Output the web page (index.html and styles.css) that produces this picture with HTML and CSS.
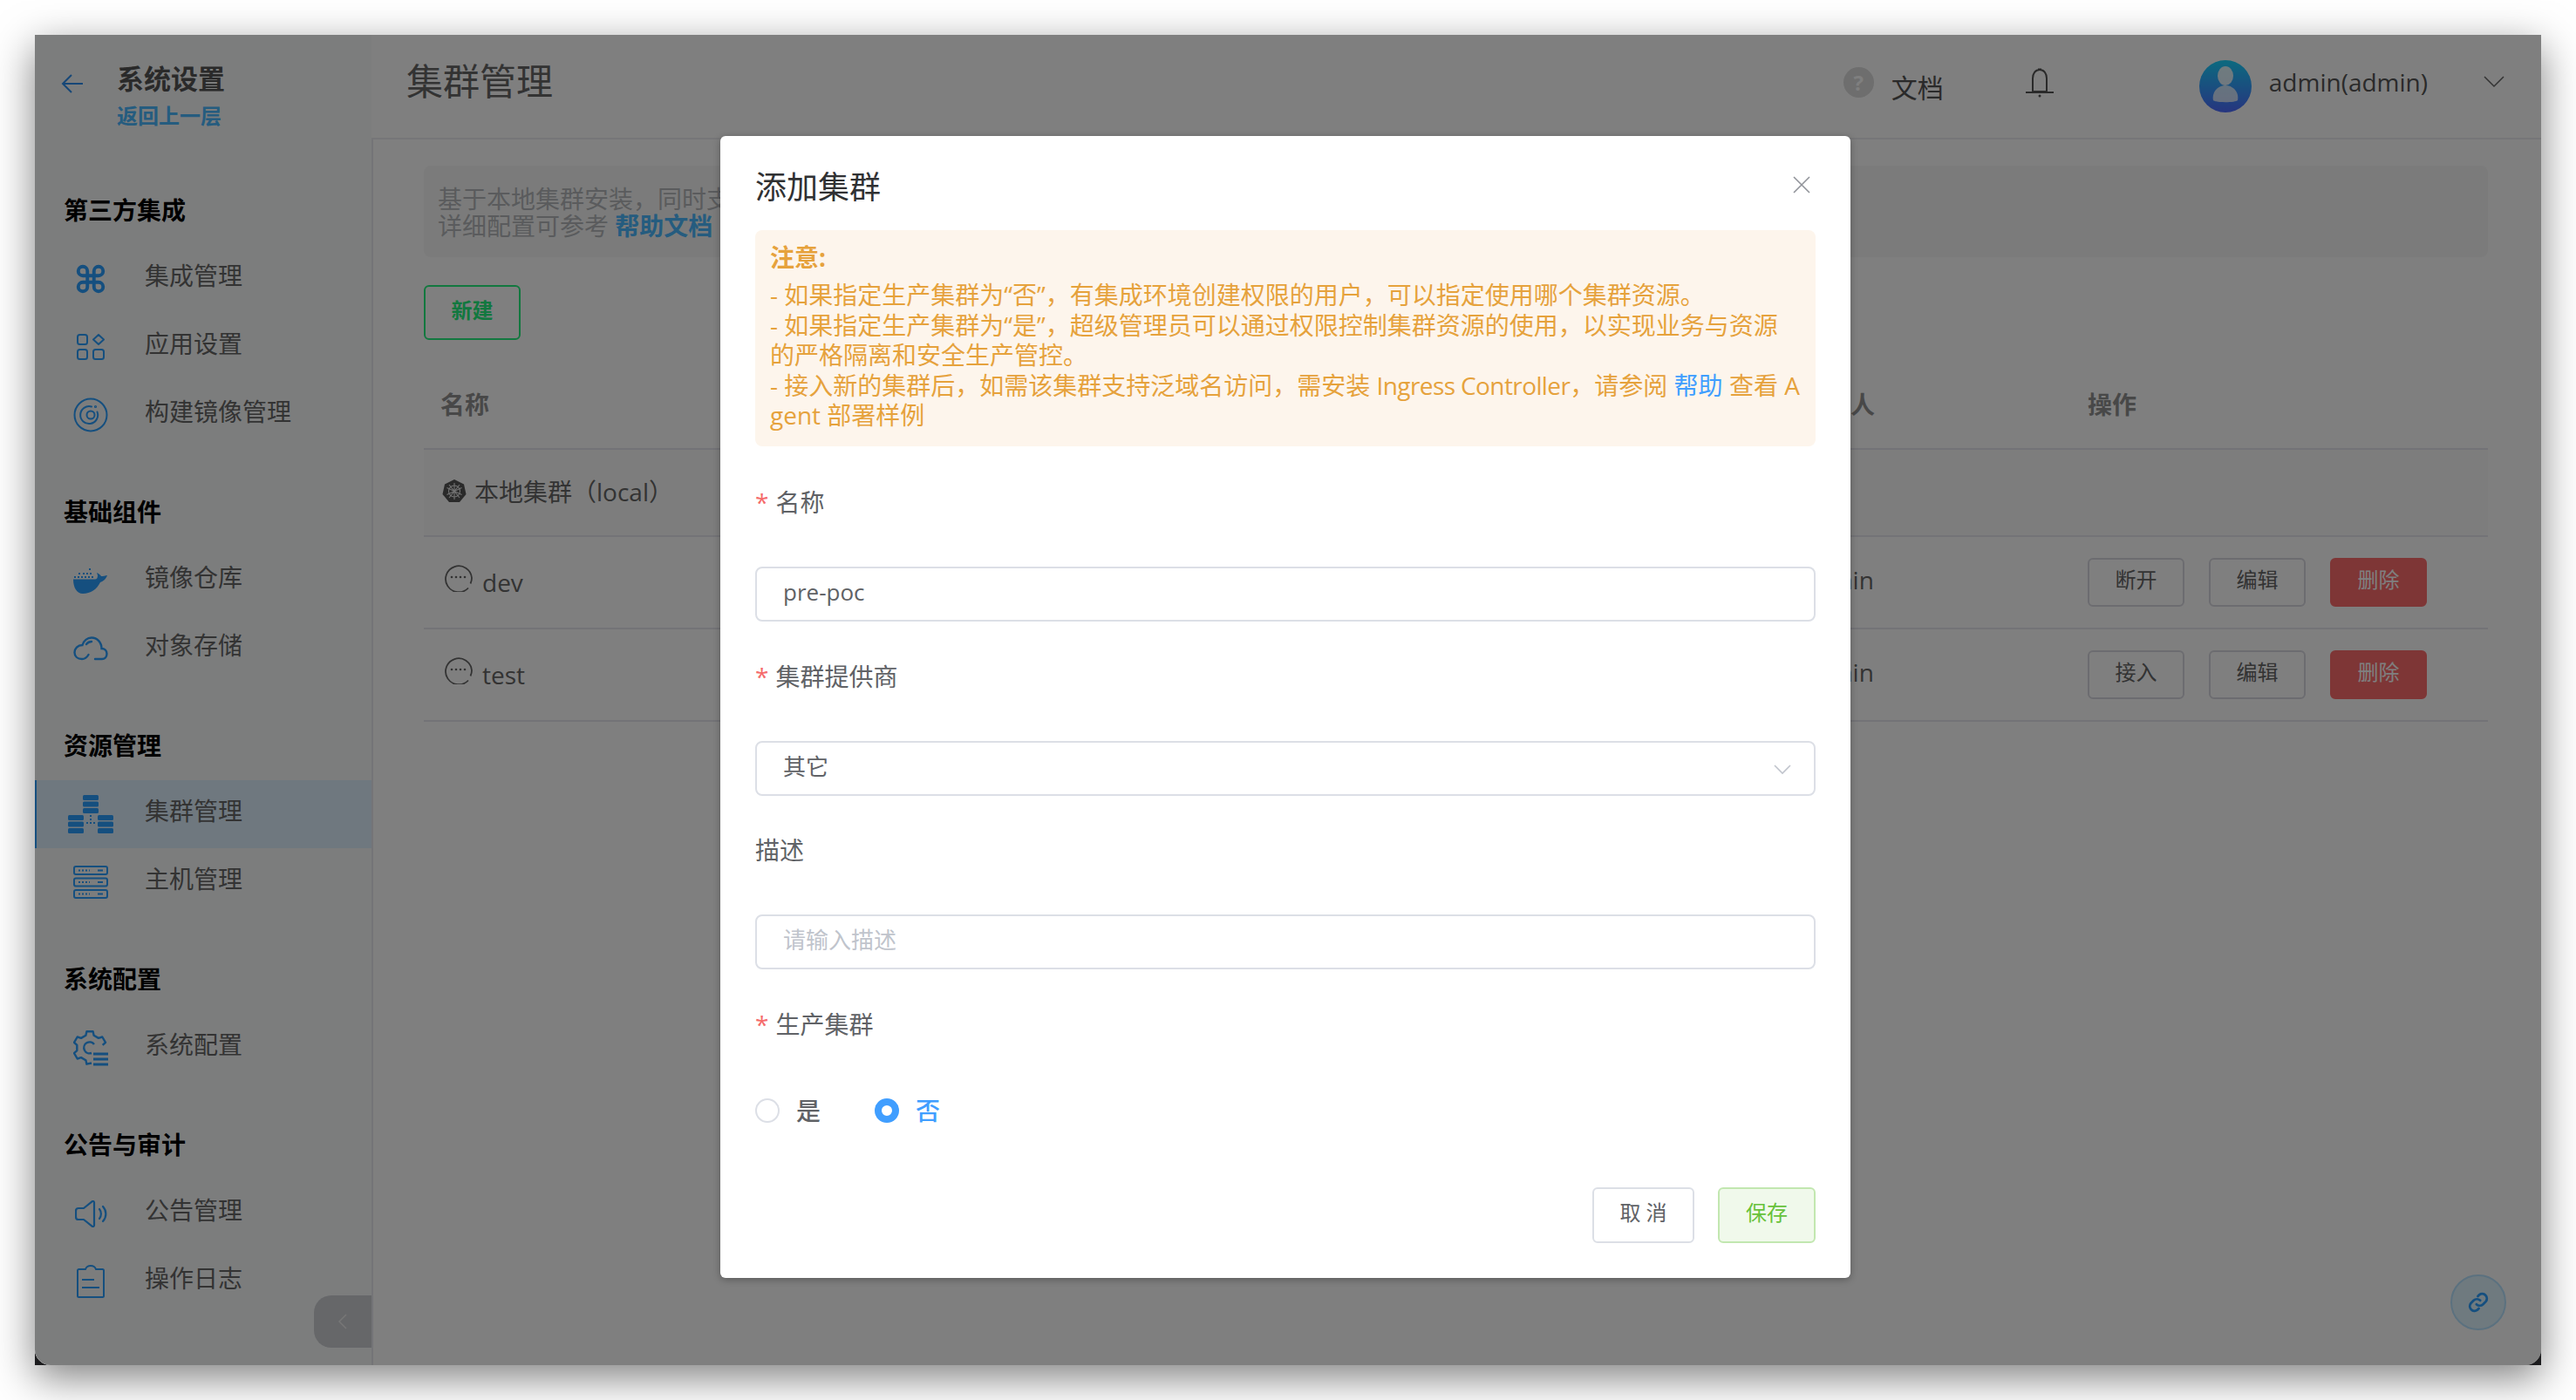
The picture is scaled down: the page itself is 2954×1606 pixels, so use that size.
FILE: index.html
```html
<!DOCTYPE html>
<html lang="zh-CN">
	<head>
		<meta charset="utf-8" />
		<title>集群管理</title>
		<link rel="stylesheet" href="styles.css">
	</head>
	<body>
		<div class="window">
			<div class="app">
				<aside class="sidebar">
					<div class="side-head">
						<svg class="back" viewBox="0 0 26 24"><path d="M25 12H2M12 2 2 12l10 10"/></svg>
						<div>
							<div class="side-title">系统设置</div>
							<div class="side-back">返回上一层</div>
						</div>
					</div>

					<div class="group group-first">第三方集成</div>
					<div class="item">
						<span class="ico"><svg width="36" height="36" viewBox="0 0 24 24" fill="none" stroke="currentColor" stroke-width="2.6"><path d="M18 2.500a3.500 3.500 0 0 0-3.500 3.500v12a3.500 3.500 0 1 0 3.500-3.500H6a3.500 3.500 0 1 0 3.500 3.500V6a3.500 3.500 0 1 0-3.500 3.500h12a3.500 3.500 0 0 0 0-7z"/></svg></span>
						<span>集成管理</span>
					</div>
					<div class="item">
						<span class="ico"><svg width="32" height="30" viewBox="0 0 32 30" fill="none" stroke="currentColor" stroke-width="2"><rect x="1" y="1" width="11" height="11" rx="2.5"/><rect x="1" y="18" width="11" height="11" rx="2.5"/><rect x="19" y="18" width="12" height="11" rx="2.5"/><path d="M25 1l6 5.5-6 5.5-6-5.5z" stroke-linejoin="round"/></svg></span>
						<span>应用设置</span>
					</div>
					<div class="item">
						<span class="ico"><svg width="40" height="40" viewBox="0 0 40 40" fill="none" stroke="currentColor" stroke-width="2"><circle cx="20" cy="20" r="18.5"/><circle cx="20" cy="20" r="4.5"/><path d="M27.5 16.5A10 10 0 1 1 21 10.5" stroke-linecap="round"/><circle cx="25.5" cy="10.5" r=".6"/></svg></span>
						<span>构建镜像管理</span>
					</div>

					<div class="group">基础组件</div>
					<div class="item">
						<span class="ico"><svg width="40" height="30" viewBox="0 0 40 30" fill="currentColor"><path d="M0 13.5h25c2 0 3-1.5 3-4.5l-1-3c2 1 4 2 5 4 2 0 5-.5 7-1-2 5-5 7-8 8-4 8-11 13-20 13C4 30 0 23 0 13.5z"/><rect x="1" y="10" width="2" height="2"/><rect x="5" y="10" width="2" height="2"/><rect x="9" y="10" width="2" height="2"/><rect x="13" y="10" width="2" height="2"/><rect x="17" y="10" width="2" height="2"/><rect x="21" y="10" width="2" height="2"/><rect x="6" y="6" width="2" height="2"/><rect x="11" y="6" width="2" height="2"/><rect x="15" y="6" width="2" height="2"/><rect x="19" y="6" width="2" height="2"/><rect x="18" y="1" width="2" height="2"/></svg></span>
						<span>镜像仓库</span>
					</div>
					<div class="item">
						<span class="ico"><svg width="40" height="28" viewBox="0 0 40 28" fill="none" stroke="currentColor" stroke-width="2.4" stroke-linecap="round"><path d="M25 26h8c3 0 5.500-2.500 5.500-6s-2.500-6-6-6c0-7-5-12.500-11.500-12.500C16 1.500 12 5 10.500 10 5 10 1.500 14 1.500 18.500S5 26 10 26c4 0 6-2.500 7.500-5"/><path d="M15 9c1.500-2 4-3 6-3"/></svg></span>
						<span>对象存储</span>
					</div>

					<div class="group">资源管理</div>
					<div class="item item-on">
						<span class="ico"><svg width="52" height="44" viewBox="0 0 52 44" fill="currentColor"><rect x="17" width="18" height="6" rx="1.500"/><rect x="17" y="7.500" width="18" height="6" rx="1.500"/><rect x="17" y="15" width="18" height="6" rx="1.500"/><rect y="23" width="18" height="6" rx="1.500"/><rect y="30.500" width="18" height="6" rx="1.500"/><rect y="38" width="18" height="6" rx="1.500"/><rect x="34" y="23" width="18" height="6" rx="1.500"/><rect x="34" y="30.500" width="18" height="6" rx="1.500"/><rect x="34" y="38" width="18" height="6" rx="1.500"/><rect x="25" y="23" width="2" height="2"/><rect x="25" y="27" width="2" height="2"/><rect x="25" y="31" width="2" height="2"/><rect x="21" y="31" width="2" height="2"/><rect x="29" y="31" width="2" height="2"/></svg></span>
						<span>集群管理</span>
					</div>
					<div class="item">
						<span class="ico"><svg width="40" height="38" viewBox="0 0 40 38" fill="none" stroke="currentColor" stroke-width="2"><rect x="1" y="1" width="38" height="9" rx="2"/><rect x="1" y="14.500" width="38" height="9" rx="2"/><rect x="1" y="28" width="38" height="9" rx="2"/><path d="M6 5.500h13M6 19h13M6 32.500h13" stroke-dasharray="2 2"/><path d="M28 5.500h6M28 19h6M28 32.500h6"/></svg></span>
						<span>主机管理</span>
					</div>

					<div class="group">系统配置</div>
					<div class="item">
						<span class="ico"><svg width="40" height="41" viewBox="0 0 40 41" fill="none" stroke="currentColor" stroke-width="2.4" stroke-linejoin="round"><path d="M21 37.500 15.400 38.700 14.400 34.300 9 31.100 4.700 32.500 1 26.200 4.300 23.100V16.900L1 13.800 4.700 7.500 9 8.900 14.400 5.700 15.400 1.300H22.600L23.600 5.700 29 8.900 33.300 7.500 37 13.800 33.700 16.900"/><path d="M24 16a6.500 6.500 0 1 0-3 10"/><path d="M23 27h17M23 33h17M23 39h17" stroke-width="2.800"/></svg></span>
						<span>系统配置</span>
					</div>

					<div class="group">公告与审计</div>
					<div class="item">
						<span class="ico"><svg width="37" height="31" viewBox="0 0 37 31" fill="none" stroke="currentColor" stroke-width="2.2" stroke-linejoin="round" stroke-linecap="round"><path d="M22 2.500v26c0 1.500-1.500 2-2.500 1.200L10 22H4c-1.700 0-3-1.300-3-3v-7c0-1.700 1.300-3 3-3h6l9.500-7.700c1-.8 2.500-.3 2.500 1.200z"/><path d="M28 10c2.500 3 2.500 8 0 11M32 7c4.500 5 4.500 12 0 17"/></svg></span>
						<span>公告管理</span>
					</div>
					<div class="item">
						<span class="ico"><svg width="32" height="38" viewBox="0 0 32 38" fill="none" stroke="currentColor" stroke-width="2"><path d="M10 5H2.500C1.600 5 1 5.600 1 6.500v29c0 .9.600 1.500 1.500 1.500h27c.9 0 1.500-.6 1.500-1.500v-29c0-.9-.6-1.500-1.500-1.500H22c-1-3-3.500-4-6-4s-5 1-6 4z"/><path d="M6 17h14M6 26h20"/></svg></span>
						<span>操作日志</span>
					</div>
					<div class="collapse"><svg width="10" height="18" viewBox="0 0 10 18"><path d="M9 1 1 9l8 8"/></svg></div>
				</aside>

				<div class="main">
					<header class="topbar">
						<div class="page-title">集群管理</div>
						<div class="help"><span class="help-dot">?</span><span>文档</span></div>
						<svg class="bell" width="36" height="36" viewBox="0 0 36 36" fill="none" stroke="currentColor" stroke-width="2"><path d="M18 3c-5 0-8 4.500-8 10v15h16V13c0-5.500-3-10-8-10zM2 29h32M16 2.500h4"/><circle cx="18" cy="33" r="1.500" fill="currentColor" stroke="none"/></svg>
						<svg class="avatar" width="60" height="60" viewBox="0 0 60 60">
							<defs><linearGradient id="ava" x1="0" y1="0" x2="0" y2="1"><stop offset="0" stop-color="#18d4ff"/><stop offset="1" stop-color="#4e6aff"/></linearGradient></defs>
							<circle cx="30" cy="30" r="30" fill="url(#ava)"/>
							<ellipse cx="30" cy="18" rx="9" ry="11" fill="#fff" opacity=".85"/>
							<path d="M16 46c-2-9 5-17 14-17s16 8 14 17c-2 3-26 3-28 0z" fill="#fff" opacity=".75"/>
						</svg>
						<span class="user">admin(admin)</span>
						<svg class="user-arrow" width="24" height="14" viewBox="0 0 24 14"><path d="M1 1l11 11L23 1"/></svg>
					</header>

					<div class="content">
						<div class="banner">基于本地集群安装，同时支持多个集群的接入与统一管理，<br>详细配置可参考 <a class="banner-link">帮助文档</a></div>
						<button class="btn-new">新建</button>
						<div class="row row-head"><span>名称</span><span>创建人</span><span>操作</span></div>
						<div class="row row-local">
							<span class="cell">
								<svg class="k8s" width="28" height="28" viewBox="0 0 28 28"><path d="M14 1 25 6.500l2.500 11.500L20 27H8L.5 18 3 6.500z" fill="#555"/><g fill="none" stroke="#e4e4e4" stroke-width="1.100"><circle cx="14" cy="14.500" r="6.500"/><path d="M14 5v19M5.500 10.500l17 8M22.500 10.500l-17 8M8 22l12-15M20 22 8 7"/></g></svg>
								<span>本地集群（local）</span>
							</span>
						</div>
						<div class="row row-tall">
							<span class="cell">
								<svg class="dots" width="32" height="32" viewBox="0 0 32 32" fill="none" stroke="#666" stroke-width="1.800"><path d="M27 27.500A15 15 0 1 1 31 16c0 2.500-.6 4.600-1.500 6.500"/><g fill="#666" stroke="none"><circle cx="8" cy="15" r="1.300"/><circle cx="13" cy="15" r="1.300"/><circle cx="18" cy="15" r="1.300"/><circle cx="23" cy="15" r="1.300"/></g></svg>
								<span>dev</span>
							</span>
							<span class="owner">admin</span>
							<span class="ops"><button class="btn">断开</button><button class="btn">编辑</button><button class="btn btn-del">删除</button></span>
						</div>
						<div class="row row-tall">
							<span class="cell">
								<svg class="dots" width="32" height="32" viewBox="0 0 32 32" fill="none" stroke="#666" stroke-width="1.800"><path d="M27 27.500A15 15 0 1 1 31 16c0 2.500-.6 4.600-1.500 6.500"/><g fill="#666" stroke="none"><circle cx="8" cy="15" r="1.300"/><circle cx="13" cy="15" r="1.300"/><circle cx="18" cy="15" r="1.300"/><circle cx="23" cy="15" r="1.300"/></g></svg>
								<span>test</span>
							</span>
							<span class="owner">admin</span>
							<span class="ops"><button class="btn">接入</button><button class="btn">编辑</button><button class="btn btn-del">删除</button></span>
						</div>
						<div class="float-link"><svg width="26" height="26" viewBox="0 0 24 24" fill="none" stroke="currentColor" stroke-width="2.600" stroke-linecap="round"><path d="M10 14a5 5 0 0 0 7 0l3-3a5 5 0 0 0-7-7l-1.500 1.500"/><path d="M14 10a5 5 0 0 0-7 0l-3 3a5 5 0 0 0 7 7l1.500-1.500"/></svg></div>
					</div>
				</div>
			</div>

			<div class="overlay">
				<div class="modal">
					<div class="modal-head">
						<span class="modal-title">添加集群</span>
						<svg class="modal-close" width="20" height="20" viewBox="0 0 20 20"><path d="M1 1l18 18M19 1 1 19"/></svg>
					</div>
					<div class="modal-body">
						<div class="alert">
							<div class="alert-title">注意:</div>
							<div class="alert-text">- 如果指定生产集群为“否”，有集成环境创建权限的用户，可以指定使用哪个集群资源。<br>- 如果指定生产集群为“是”，超级管理员可以通过权限控制集群资源的使用，以实现业务与资源的严格隔离和安全生产管控。<br>- 接入新的集群后，如需该集群支持泛域名访问，需安装 <span class="alert-latin">Ingress Controller</span>，请参阅 <a class="alert-link">帮助</a> 查看 Agent 部署样例</div>
						</div>
						<div class="field">
							<label class="label"><i class="req">*</i>名称</label>
							<div class="input">pre-poc</div>
						</div>
						<div class="field">
							<label class="label"><i class="req">*</i>集群提供商</label>
							<div class="input input-select">其它<svg width="20" height="12" viewBox="0 0 20 12"><path d="M1 1l9 9 9-9"/></svg></div>
						</div>
						<div class="field">
							<label class="label">描述</label>
							<div class="input input-empty">请输入描述</div>
						</div>
						<div class="field field-radio">
							<label class="label"><i class="req">*</i>生产集群</label>
							<div class="radios">
								<span class="radio"><i class="radio-dot"></i>是</span>
								<span class="radio radio-on"><i class="radio-dot"></i>否</span>
							</div>
						</div>
					</div>
					<div class="modal-foot">
						<button class="foot-btn">取 消</button>
						<button class="foot-btn foot-save">保存</button>
					</div>
				</div>
			</div>
		</div>
	</body>
</html>
```

FILE: styles.css
```css
html, body {
	margin:0;
	padding:0;
	height:100%;
	overflow:hidden;
	background:#fff;
	font-family:"Open Sans","Noto Sans CJK SC",sans-serif;
	font-size:28px;
}
button {
	font-family:inherit;
	cursor:pointer;
}
.window {
	position:relative;
	width:2874px;
	height:1526px;
	margin:40px;
	background:#1c1c1e;
	box-shadow:0 14px 44px rgba(0,0,0,.5);
}
.app {
	display:flex;
	height:100%;
	background:#fff;
	border-radius:0 0 18px 18px;
	overflow:hidden;
}

/* sidebar */
.sidebar {
	position:relative;
	flex:0 0 386px;
	box-sizing:border-box;
	background:#f8fafb;
	color:#666;
}
.side-head {
	display:flex;
	padding:32px 0 0 30px;
	height:128px;
	box-sizing:border-box;
}
.back {
	width:26px;
	height:24px;
	margin:12px 38px 0 0;
	fill:none;
	stroke:#2f8fee;
	stroke-width:2;
}
.side-title {
	font-size:31px;
	line-height:36px;
	font-weight:700;
	color:#555;
}
.side-back {
	margin-top:8px;
	font-size:24px;
	line-height:34px;
	font-weight:700;
	color:#4ab8ff;
}
.group {
	height:36px;
	line-height:36px;
	margin:54px 0 22px 33px;
	font-weight:700;
	color:#000;
}
.group-first {
	margin-top:55px;
}
.item {
	display:flex;
	align-items:center;
	height:78px;
	padding-left:23px;
	box-sizing:border-box;
	border-left:2px solid transparent;
	line-height:70px;
}
.item > span:last-child {
	margin-top:-8px;
}
.item-on {
	background:#dff0ff;
	border-left-color:#2a9fff;
}
.ico {
	display:flex;
	flex:0 0 78px;
	justify-content:center;
	align-items:center;
	margin-right:23px;
	color:#2a9fff;
}
.collapse {
	position:absolute;
	right:0;
	bottom:20px;
	display:flex;
	align-items:center;
	justify-content:center;
	width:66px;
	height:60px;
	background:#ccced2;
	border-radius:20px 0 0 20px;
}
.collapse svg {
	fill:none;
	stroke:#eee;
	stroke-width:1.500;
}

/* main */
.main {
	flex:1;
	display:flex;
	flex-direction:column;
	min-width:0;
}
.topbar {
	display:flex;
	align-items:center;
	flex:0 0 120px;
	box-sizing:border-box;
	padding:0 42px 0 40px;
	border-bottom:2px solid #ececf0;
	color:#666;
}
.page-title {
	font-size:42px;
	flex:1;
	margin-top:-18px;
}
.help {
	display:flex;
	align-items:center;
	font-size:30px;
	color:#555;
}
.help-dot {
	display:flex;
	justify-content:center;
	align-items:center;
	width:35px;
	height:35px;
	margin-right:20px;
	margin-top:-10px;
	border-radius:50%;
	background:#dcdcdc;
	color:#fff;
	font-size:24px;
	font-weight:700;
}
.bell {
	margin:-8px 0 0 92px;
	color:#555;
}
.avatar {
	margin:0 20px 0 165px;
}
.user {
	margin-top:-10px;
	color:#555;
}
.user-arrow {
	margin:-10px 0 0 64px;
	fill:none;
	stroke:#666;
	stroke-width:1.500;
}
.content {
	position:relative;
	flex:1;
	box-sizing:border-box;
	padding:30px 61px 0 58px;
	border-left:2px solid #e8e8ee;
}
.banner {
	box-sizing:border-box;
	height:105px;
	padding:23px 16px 0;
	line-height:31px;
	background:#f6f6f6;
	border-radius:8px;
	color:#b4b6ba;
}
.banner-link {
	font-weight:700;
	color:#4ab8ff;
}
.btn-new {
	display:block;
	width:111px;
	height:63px;
	margin-top:32px;
	padding:0 0 8px;
	background:transparent;
	border:2px solid #25f07e;
	border-radius:6px;
	color:#25f07e;
	font-size:24px;
	font-weight:700;
}
.row {
	display:grid;
	grid-template-columns:1559px 328px 1fr;
	align-items:center;
	box-sizing:border-box;
	padding-left:21px;
	border-bottom:2px solid #e6e6ee;
}
.row-head {
	height:104px;
	margin-top:22px;
	color:#909090;
	font-weight:700;
}
.row-head span:first-child {
	margin-left:-2px;
}
.row-local {
	height:100px;
	background:#fafafa;
}
.row-tall {
	height:106px;
}
.cell {
	display:flex;
	align-items:center;
	color:#666;
}
.row-local .cell {
	margin-top:-4px;
}
.k8s {
	margin-right:9px;
}
.dots {
	margin:-10px 11px 0 3px;
}
.owner {
	margin-top:-6px;
	color:#666;
}
.ops {
	display:flex;
	gap:28px;
}
.btn {
	width:111px;
	height:56px;
	padding:0 0 10px;
	background:transparent;
	border:2px solid #d8d8e0;
	border-radius:6px;
	color:#666;
	font-size:24px;
}
.btn-del {
	background:#fc6c6c;
	border-color:#fc6c6c;
	color:#fff;
}
.float-link {
	position:absolute;
	right:40px;
	bottom:40px;
	display:flex;
	justify-content:center;
	align-items:center;
	width:64px;
	height:64px;
	box-sizing:border-box;
	border:2px solid #b6e2ff;
	border-radius:50%;
	background:#def4ff;
	color:#2a9fff;
}

/* modal over a dark mask */
.overlay {
	position:absolute;
	top:0;
	left:0;
	right:0;
	bottom:0;
	box-sizing:border-box;
	padding:116px 0 0 786px;
	background:rgba(0,0,0,.5);
	border-radius:0 0 18px 18px;
}
.modal {
	display:flex;
	flex-direction:column;
	width:1296px;
	height:1310px;
	box-sizing:border-box;
	background:#fff;
	border-radius:6px;
	box-shadow:0 2px 8px rgba(0,0,0,.3);
	color:#606266;
}
.modal-head {
	display:flex;
	justify-content:space-between;
	align-items:center;
	flex:0 0 108px;
	box-sizing:border-box;
	padding:4px 46px 0 40px;
}
.modal-title {
	font-size:36px;
	color:#303133;
}
.modal-close {
	fill:none;
	stroke:#909399;
	stroke-width:1.600;
}
.modal-body {
	padding:0 40px;
}
.alert {
	box-sizing:border-box;
	height:248px;
	padding:13px 17px 0;
	margin-bottom:44px;
	background:#fdf5ec;
	border-radius:8px;
	color:#e6a23c;
}
.alert-title {
	font-weight:700;
	line-height:36px;
}
.alert-text {
	margin-top:8px;
	line-height:34.500px;
	word-break:break-all;
}
.alert-latin {
	letter-spacing:-.6px;
}
.alert-link {
	color:#409eff;
}
.field {
	margin-bottom:42.500px;
}
.label {
	display:block;
	height:40px;
	line-height:40px;
	margin-bottom:54px;
}
.req {
	font-style:normal;
	color:#f56c6c;
	margin-right:8px;
}
.input {
	display:flex;
	align-items:center;
	justify-content:space-between;
	box-sizing:border-box;
	height:63px;
	padding:0 30px 5px;
	border:2px solid #dcdfe6;
	border-radius:8px;
	font-size:26px;
	line-height:48px;
}
.input-empty {
	color:#c0c4cc;
}
.input-select svg {
	fill:none;
	stroke:#c0c4cc;
	stroke-width:1.600;
	margin-right:-4px;
	margin-top:8px;
}
.field-radio .label {
	margin-bottom:62px;
}
.radios {
	display:flex;
	gap:62px;
}
.radio {
	display:flex;
	align-items:center;
	font-size:28px;
	font-weight:500;
	line-height:34px;
}
.radio-dot {
	box-sizing:border-box;
	width:28px;
	height:28px;
	margin-right:19px;
	border:2px solid #dcdfe6;
	border-radius:50%;
	background:#fff;
}
.radio-on {
	color:#409eff;
}
.radio-on .radio-dot {
	border:8px solid #409eff;
}
.modal-foot {
	display:flex;
	justify-content:flex-end;
	gap:27px;
	margin-top:auto;
	padding:0 40px 40px;
}
.foot-btn {
	width:117px;
	height:64px;
	padding:0 0 10px;
	background:#fff;
	border:2px solid #dcdfe6;
	border-radius:6px;
	color:#606266;
	font-size:24px;
}
.foot-save {
	width:112px;
	background:#f0f9eb;
	border-color:#c2e7b0;
	color:#67c23a;
}
```
